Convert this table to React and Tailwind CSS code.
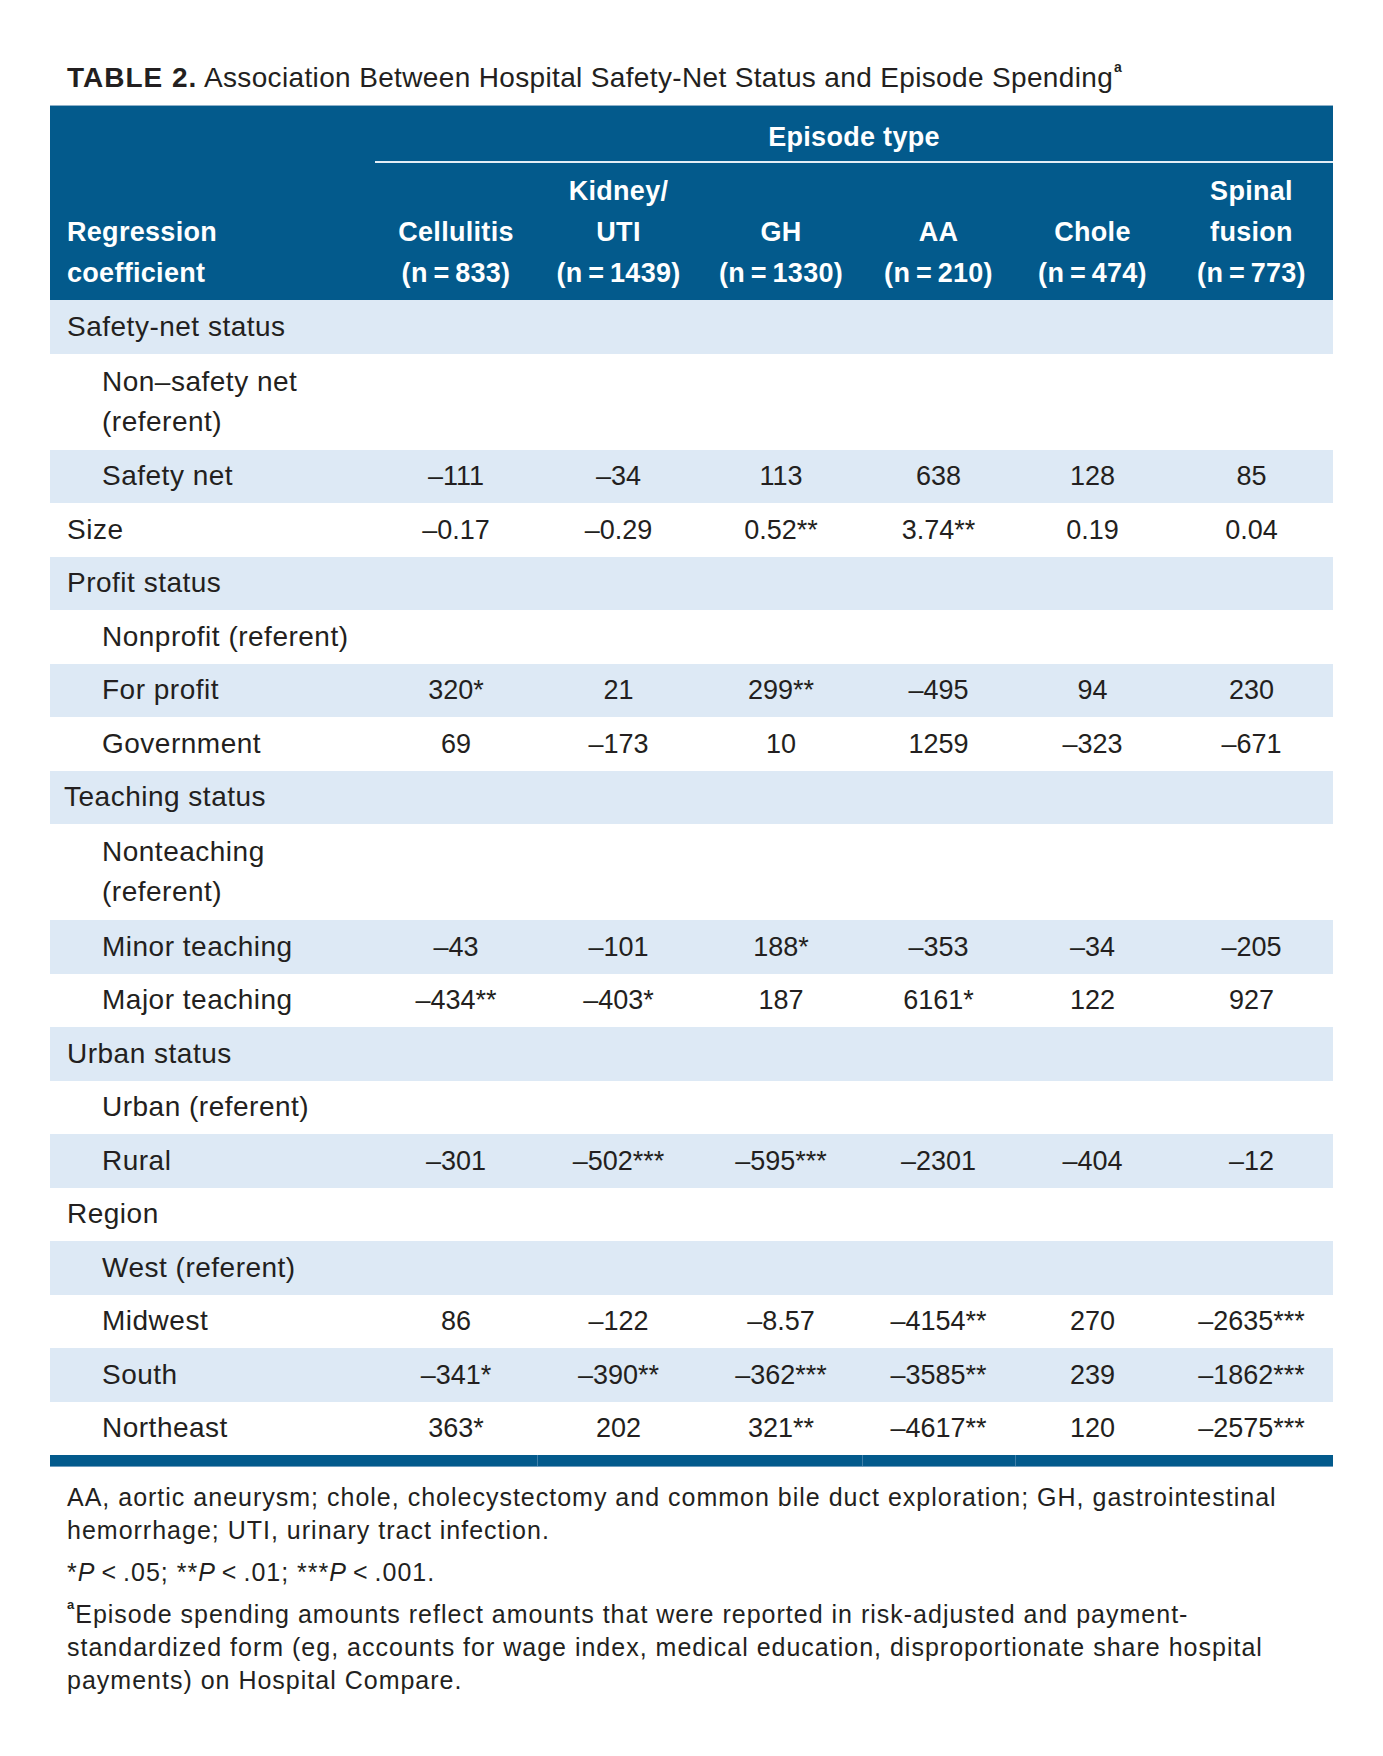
import React from 'react';

const cols = [
  { name: ['', 'Cellulitis', '(n\u2009=\u2009833)'] },
  { name: ['Kidney/', 'UTI', '(n\u2009=\u20091439)'] },
  { name: ['', 'GH', '(n\u2009=\u20091330)'] },
  { name: ['', 'AA', '(n\u2009=\u2009210)'] },
  { name: ['', 'Chole', '(n\u2009=\u2009474)'] },
  { name: ['Spinal', 'fusion', '(n\u2009=\u2009773)'] },
];

const rows = [
  { label: ['Safety-net status'], lvl: 0 },
  { label: ['Non–safety net', '(referent)'], lvl: 1 },
  { label: ['Safety net'], lvl: 1, vals: ['–111', '–34', '113', '638', '128', '85'] },
  { label: ['Size'], lvl: 0, vals: ['–0.17', '–0.29', '0.52**', '3.74**', '0.19', '0.04'] },
  { label: ['Profit status'], lvl: 0 },
  { label: ['Nonprofit (referent)'], lvl: 1 },
  { label: ['For profit'], lvl: 1, vals: ['320*', '21', '299**', '–495', '94', '230'] },
  { label: ['Government'], lvl: 1, vals: ['69', '–173', '10', '1259', '–323', '–671'] },
  { label: ['Teaching status'], lvl: 2 },
  { label: ['Nonteaching', '(referent)'], lvl: 1 },
  { label: ['Minor teaching'], lvl: 1, vals: ['–43', '–101', '188*', '–353', '–34', '–205'] },
  { label: ['Major teaching'], lvl: 1, vals: ['–434**', '–403*', '187', '6161*', '122', '927'] },
  { label: ['Urban status'], lvl: 0 },
  { label: ['Urban (referent)'], lvl: 1 },
  { label: ['Rural'], lvl: 1, vals: ['–301', '–502***', '–595***', '–2301', '–404', '–12'] },
  { label: ['Region'], lvl: 0 },
  { label: ['West (referent)'], lvl: 1 },
  { label: ['Midwest'], lvl: 1, vals: ['86', '–122', '–8.57', '–4154**', '270', '–2635***'] },
  { label: ['South'], lvl: 1, vals: ['–341*', '–390**', '–362***', '–3585**', '239', '–1862***'] },
  { label: ['Northeast'], lvl: 1, vals: ['363*', '202', '321**', '–4617**', '120', '–2575***'] },
];

const grid = 'grid grid-cols-[325px_162px_163px_162px_153px_155px_163px]';
const font = { fontFamily: '"Liberation Sans", Arial, sans-serif' };

export default function App() {
  return (
    <div className="w-[1383px] h-[1756px] bg-white text-[#231f20] pt-[60px] pl-[50px]" style={font}>
      {/* title */}
      <h1 className="h-[36px] leading-[36px] mb-[9px] pl-[17px] text-[28px] tracking-[0.35px] whitespace-nowrap">
        <span className="font-bold tracking-[1px]">TABLE 2.</span> Association Between Hospital Safety-Net Status and Episode Spending
        <sup className="text-[14px] font-bold align-[8px] ml-[1px]">a</sup>
      </h1>

      <div className="w-[1283px]">
        {/* header */}
        <div className="bg-[#035a8c] text-white font-bold text-[27px] tracking-[0.3px] border-t border-[#8fb1c9]">
          <div className={`${grid} h-[55px]`}>
            <div />
            <div className="col-span-6 flex items-center justify-center pt-[7px]">Episode type</div>
          </div>
          <div className={grid}>
            <div />
            <div className="col-span-6 h-[2px] bg-[#e3edf6]" />
          </div>
          <div className={`${grid} h-[137px] items-end pb-[6px] leading-[41px]`}>
            <div className="pl-[17px]">
              <div>Regression</div>
              <div>coefficient</div>
            </div>
            {cols.map((c, i) => (
              <div key={i} className="text-center">
                {c.name.map((t, j) => (
                  <div key={j} className="h-[41px] whitespace-nowrap">{t}</div>
                ))}
              </div>
            ))}
          </div>
        </div>

        {/* body */}
        <div>
          {rows.map((r, i) => (
            <div
              key={i}
              className={`${grid} items-center ${i % 2 === 0 ? 'bg-[#dde9f5]' : 'bg-white'} ${r.label.length > 1 ? 'h-[96px]' : 'h-[53.5px]'}`}
            >
              <div className={`text-[28px] tracking-[0.5px] leading-[40px] ${r.lvl === 1 ? 'pl-[52px]' : r.lvl === 2 ? 'pl-[14px]' : 'pl-[17px]'}`}>
                {r.label.map((t, j) => (
                  <div key={j} className="whitespace-nowrap">{t}</div>
                ))}
              </div>
              {(r.vals || ['', '', '', '', '', '']).map((v, j) => (
                <div key={j} className="text-center text-[27px] whitespace-nowrap">{v}</div>
              ))}
            </div>
          ))}
        </div>

        {/* bottom bar */}
        <div className={`${grid} h-[12px] bg-[#035a8c] border-b border-[#6e9cbd]`}>
          <div />
          <div />
          <div className="border-l border-[#3f7fa9]" />
          <div />
          <div className="border-l border-[#3f7fa9]" />
          <div className="border-l border-[#3f7fa9]" />
          <div />
        </div>
      </div>

      {/* notes */}
      <div className="pl-[17px] mt-[14px] text-[25px] tracking-[1px] leading-[33px] whitespace-nowrap">
        <p>
          AA, aortic aneurysm; chole, cholecystectomy and common bile duct exploration; GH, gastrointestinal
          <br />
          hemorrhage; UTI, urinary tract infection.
        </p>
        <p className="mt-[9px]">
          *<i>P</i>{'\u2009<\u2009'}.05; **<i>P</i>{'\u2009<\u2009'}.01; ***<i>P</i>{'\u2009<\u2009'}.001.
        </p>
        <p className="mt-[9px]">
          <sup className="text-[13px] font-bold align-[8px]">a</sup>Episode spending amounts reflect amounts that were reported in risk-adjusted and payment-
          <br />
          standardized form (eg, accounts for wage index, medical education, disproportionate share hospital
          <br />
          payments) on Hospital Compare.
        </p>
      </div>
    </div>
  );
}
